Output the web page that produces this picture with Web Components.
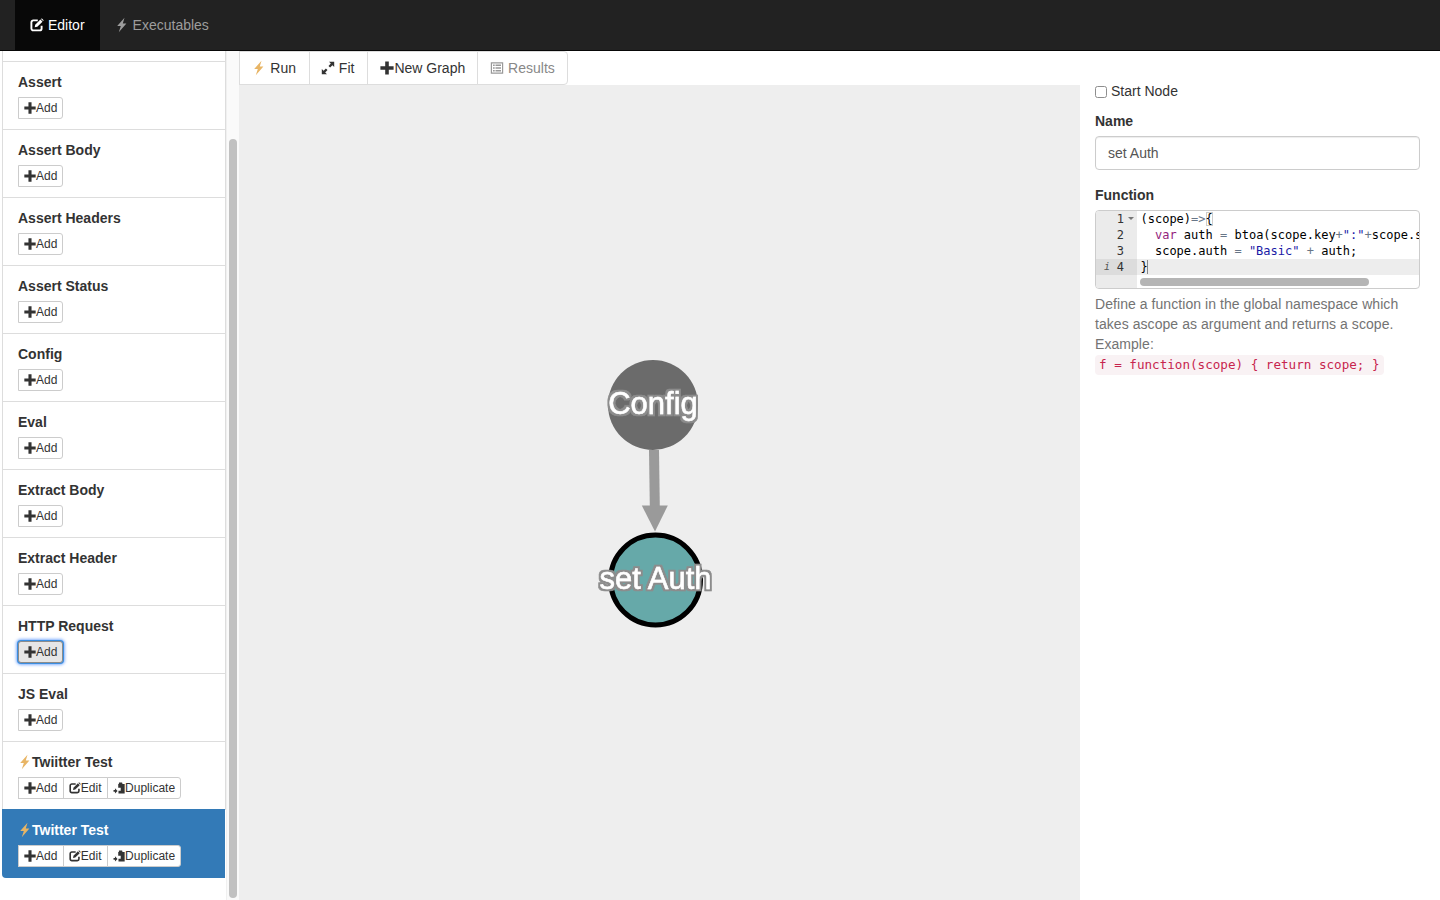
<!DOCTYPE html>
<html><head><meta charset="utf-8">
<style>
html,body{margin:0;height:100%;overflow:hidden;background:#fff}
body{font:14px/20px "Liberation Sans",Arial,sans-serif;color:#333}
</style></head><body>
<app-shell></app-shell>
<script>
const ICONS={
 plus:'<path d="M5.200 .4h3.600v4.800h4.800v3.600H8.800v4.800H5.200V8.800H.4V5.200h4.800z"/>',
 edit:'<path d="M11.600 7.800v2.700a1.900 1.900 0 0 1-1.900 1.900H3.300a1.900 1.900 0 0 1-1.900-1.900V4.300a1.900 1.900 0 0 1 1.900-1.900h4.500" fill="none" stroke="currentColor" stroke-width="1.900"/><path d="M5.200 6.700 10.400 1.600 12.500 3.700 7.300 8.800 4.700 9.300z"/><path d="M11.300.7c.3-.3.6-.3.9 0l1.200 1.200c.3.3.3.6 0 .9l-.3.3-2.100-2.100z"/>',
 flash:'<path d="M9.500-.3 2.200 8.100h3.600L3.800 14.300l7.600-8.800H7.800z"/>',
 full:'<path d="M8 .8h5.200V6l-1.800-1.800-2.300 2.300-1.600-1.600 2.300-2.300zM6 13.200H.8V8l1.800 1.800 2.300-2.300 1.600 1.600-2.300 2.300z"/>',
 list:'<path fill-rule="evenodd" d="M.8 1.200h12.400v11.600H.8zM2 2.400v9.200h10V2.400z"/><path d="M3 3.400h1.700v1.500H3zM5.500 3.400H11v1.500H5.500zM3 6.200h1.700v1.500H3zM5.500 6.200H11v1.500H5.500zM3 9h1.700v1.500H3zM5.500 9H11v1.500H5.500z"/>',
 dup:'<path d="M7 .6h3.600l.5 1.700h2.500V13.400H6.400V10.200h2.600V6.700H6.100V2.300H6.800zM.6 9.300h1.700V7.400l3 3-3 3v-1.900H.6z"/>'
};
function icon(n,s=14,c='currentColor'){return `<svg viewBox="0 0 14 14" width="${s}" height="${s}" fill="${c}" aria-hidden="true" style="flex:none;overflow:visible">${ICONS[n]}</svg>`}

class NavBar extends HTMLElement{connectedCallback(){this.attachShadow({mode:'open'}).innerHTML=`<style>
:host{display:flex;height:50px;background:#222;border-bottom:1px solid #080808;padding-left:15px;flex:none}
a{display:flex;align-items:center;gap:4px;padding:0 15px;color:#9d9d9d;font-size:14px}
a.on{background:#080808;color:#fff}
svg{margin-top:-1px}
</style><a class="on">${icon('edit')}<span>Editor</span></a><a>${icon('flash')}<span>Executables</span></a>`}}
customElements.define('nav-bar',NavBar);

class BtnGroup extends HTMLElement{connectedCallback(){const items=this.getAttribute('items').split(',');const focus=this.hasAttribute('focus');
this.attachShadow({mode:'open'}).innerHTML=`<style>
:host{display:inline-flex;vertical-align:top;margin-left:1px}
button{display:flex;align-items:center;height:22px;padding:0 5.500px 0 5px;margin:0 0 0 -1px;border:1px solid #ccc;background:#fff;color:#333;font:12px/18px "Liberation Sans",Arial,sans-serif}
button:first-child{margin-left:0;border-radius:3px 0 0 3px}
button:last-child{border-radius:0 3px 3px 0;padding-right:5px}
button:only-child{border-radius:3px;padding-right:5.500px}
button.f{background:#e6e6e6;border-color:#8c8c8c;box-shadow:0 0 0 1px #3b8ee0,0 0 3px 2px rgba(77,144,254,.7);border-radius:3px}
</style>`+items.map(t=>{const ic=t=='Add'?'plus':t=='Edit'?'edit':'dup';return `<button class="${focus?'f':''}">${icon(ic,12)}<span>${t}</span></button>`}).join('')}}
customElements.define('btn-group',BtnGroup);

class GraphItem extends HTMLElement{connectedCallback(){const a=this.getAttribute('name'),ex=this.hasAttribute('exec'),foc=this.hasAttribute('focus');
this.attachShadow({mode:'open'}).innerHTML=`<style>
:host{display:block;box-sizing:border-box;height:68px;padding:9px 15px 0;border-left:1px solid #ddd;border-right:1px solid #ddd;border-bottom:1px solid #ddd;background:#fff;color:#333}
:host([active]){height:69px;margin:-1px 1px 0 0;padding:10px 0 0 16px;border:0;background:#337ab7;color:#fff;border-radius:0 0 0 4px}
h4{display:flex;align-items:center;margin:0 0 5px;font-size:14px;line-height:22px;font-weight:700;height:21px}
</style><h4>${ex?icon('flash',14,'#e8b565'):''}<span>${a}</span></h4><btn-group items="${ex?'Add,Edit,Duplicate':'Add'}" ${foc?'focus':''}></btn-group>`}}
customElements.define('graph-item',GraphItem);

class SideBar extends HTMLElement{connectedCallback(){
const n=['Assert','Assert Body','Assert Headers','Assert Status','Config','Eval','Extract Body','Extract Header','HTTP Request','JS Eval'];
this.attachShadow({mode:'open'}).innerHTML=`<style>
:host{display:flex;width:239px;flex:none;height:849px;overflow:hidden}
.list{width:224px;margin-left:2px;flex:none;display:flex;flex-direction:column}
.cut{height:10px;border-left:1px solid #ddd;border-right:1px solid #ddd;border-bottom:1px solid #ddd;flex:none}
.track{width:13px;background:#fafafa;border-left:1px solid #f0f0f0;box-sizing:border-box;flex:none;padding:88px 1px 2px 2px}
.thumb{height:759px;width:8px;background:#c1c1c1;border-radius:4px}
</style><div class="list"><div class="cut"></div>${n.map(x=>`<graph-item name="${x}" ${x=='HTTP Request'?'focus':''}></graph-item>`).join('')}<graph-item name="Twiitter Test" exec></graph-item><graph-item name="Twitter Test" exec active></graph-item></div><div class="track"><div class="thumb"></div></div>`}}
customElements.define('side-bar',SideBar);

class ToolBar extends HTMLElement{connectedCallback(){
const b=[['flash','Run','#e8b565',' '],['full','Fit','#333',' '],['plus','New Graph','#333',''],['list','Results','#999',' ']];
this.attachShadow({mode:'open'}).innerHTML=`<style>
:host{display:flex;height:34px;flex:none;padding-left:1.400px}
div{display:flex;align-items:center;height:34px;box-sizing:border-box;padding:0 12px;margin-left:-1px;border:1px solid #ddd;background:#fff;color:#333;font-size:14px;white-space:pre}
div:first-child{margin-left:0;border-radius:4px 0 0 4px;padding-right:11px}
div:nth-child(2){padding-right:13px}
div:nth-child(3){padding:0 13px 0 11px}
div:last-child{border-radius:0 4px 4px 0;color:#888}
</style>`+b.map(([i,t,c,s])=>`<div>${icon(i,14,c)}<span>${s}${t}</span></div>`).join('')}}
customElements.define('tool-bar',ToolBar);

class GraphCanvas extends HTMLElement{connectedCallback(){
this.attachShadow({mode:'open'}).innerHTML=`<style>
:host{display:block;flex:1;background:#eee;position:relative}
svg{display:block;width:100%;height:100%}
text{font:400 31px "Liberation Sans",Arial,sans-serif;fill:#fff;stroke:#fff;stroke-width:.5;text-anchor:middle;filter:url(#halo)}
</style><svg viewBox="239 85 841 815">
<defs><filter id="halo" x="-10%" y="-20%" width="120%" height="140%">
<feMorphology in="SourceAlpha" operator="dilate" radius="2" result="d"/>
<feGaussianBlur in="d" stdDeviation=".5" result="b"/>
<feFlood flood-color="#8c8c8c"/><feComposite in2="b" operator="in" result="o"/>
<feMerge><feMergeNode in="o"/><feMergeNode in="SourceGraphic"/></feMerge></filter></defs>
<path d="M654 450 654.800 506" stroke="#9a9a9a" stroke-width="10" fill="none"/>
<path d="M641.800 505.500H667.800L655 531.500z" fill="#9a9a9a"/>
<circle cx="653" cy="405" r="45" fill="#6b6b6b"/>
<circle cx="655.500" cy="580" r="45" fill="#66a9a9" stroke="#000" stroke-width="5"/>
<text x="653" y="414">Config</text>
<text x="655.500" y="589">set Auth</text>
</svg>`}}
customElements.define('graph-canvas',GraphCanvas);

class CodeEditor extends HTMLElement{connectedCallback(){
const L=[
 '(scope)<i class="o">=&gt;</i><u>{</u>',
 '  <i class="k">var</i> auth <i class="o">=</i> btoa(scope.key<i class="o">+</i><i class="s">":"</i><i class="o">+</i>scope.secret);',
 '  scope.auth <i class="o">=</i> <i class="s">"Basic"</i> <i class="o">+</i> auth;',
 '<u class="c">}</u>'];
this.attachShadow({mode:'open'}).innerHTML=`<style>
:host{display:block;height:79px;box-sizing:border-box;border:1px solid #ccc;border-radius:4px;overflow:hidden;position:relative;font:12px/16px "DejaVu Sans Mono",monospace;color:#000;background:#fff}
.row{display:flex;height:16px}
.row.a{background:#ededed}
.g{width:41px;flex:none;background:#ebebeb;text-align:right;box-sizing:border-box;padding-right:13px;position:relative;color:#333}
.row.a .g{background:#dcdcdc}
.fold{position:absolute;right:3px;top:6px;border:3px solid transparent;border-top:3px solid #777;border-bottom:0}
.info{position:absolute;left:8px;top:0;font-style:italic;font-size:10px;color:#555}
pre{margin:0 0 0 3.500px;font:inherit;white-space:pre}
i{font-style:normal}.k{color:#93237d}.s{color:#1a1aa6}.o{color:#687687}
u{text-decoration:none;box-shadow:inset 0 0 0 1px #ccc}
u.c{box-shadow:inset -1px 0 0 #888}
.bot{position:absolute;left:0;right:0;top:64px;height:14px;display:flex}
.bot .gg{width:41px;background:#ebebeb;flex:none}
.bar{position:absolute;left:44px;top:3px;width:229px;height:8px;border-radius:4px;background:#b5b5b5}
</style>${L.map((l,i)=>`<div class="row ${i==3?'a':''}"><div class="g">${i==3?'<span class="info">i</span>':''}${i+1}${i==0?'<span class="fold"></span>':''}</div><pre>${l}</pre></div>`).join('')}<div class="bot"><div class="gg"></div><div class="bar"></div></div>`}}
customElements.define('code-editor',CodeEditor);

class PropPanel extends HTMLElement{connectedCallback(){
this.attachShadow({mode:'open'}).innerHTML=`<style>
:host{display:block;width:325px;flex:none;padding:30px 20px 0 15px;font-size:14px;color:#333}
.chk{display:flex;align-items:center;height:20px;margin-bottom:10px}
.box{width:12px;height:12px;box-sizing:border-box;border:1px solid #8e8e8e;border-radius:2.500px;background:#fff;margin:1px 4px 0 0}
label{display:block;font-weight:700;height:20px;margin-bottom:5px}
.input{height:34px;box-sizing:border-box;border:1px solid #ccc;border-radius:4px;padding:6px 12px;color:#555;margin-bottom:15px;box-shadow:inset 0 1px 1px rgba(0,0,0,.075)}
.help{margin-top:5px;color:#737373;display:block;letter-spacing:.06px}
code{display:inline-block;font:12.600px/20px "DejaVu Sans Mono",monospace;letter-spacing:0;color:#c7254e;background:#f9f2f4;border-radius:4px;padding:0 4px;height:20px}
</style><div class="chk"><span class="box"></span>Start Node</div><label>Name</label><div class="input">set Auth</div><label>Function</label><code-editor></code-editor><div class="help">Define a function in the global namespace which takes ascope as argument and returns a scope. Example:<br><code>f = function(scope) { return scope; }</code></div>`}}
customElements.define('prop-panel',PropPanel);

class AppShell extends HTMLElement{connectedCallback(){
this.attachShadow({mode:'open'}).innerHTML=`<style>
:host{display:flex;flex-direction:column;height:900px}
.body{display:flex;flex:1;min-height:0}
.mid{width:841px;flex:none;display:flex;flex-direction:column}
</style><nav-bar></nav-bar><div class="body"><side-bar></side-bar><div class="mid"><tool-bar></tool-bar><graph-canvas></graph-canvas></div><prop-panel></prop-panel></div>`}}
customElements.define('app-shell',AppShell);
</script>
</body></html>
